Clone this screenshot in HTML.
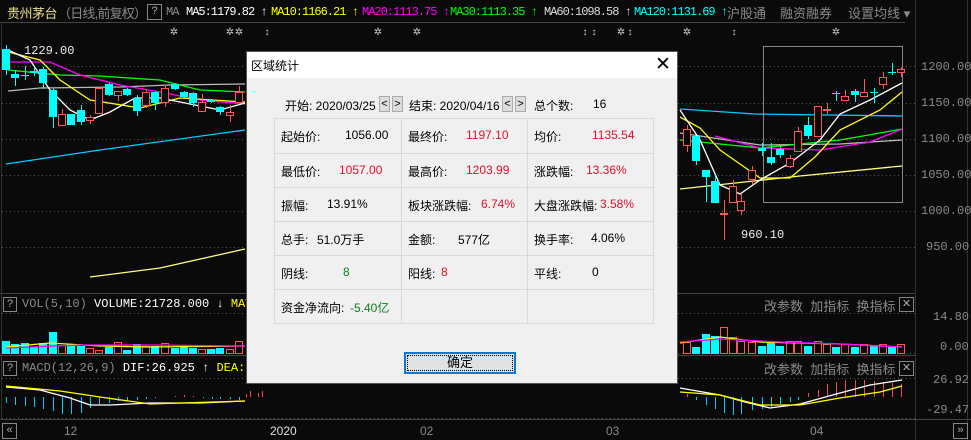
<!DOCTYPE html>
<html><head><meta charset="utf-8"><style>
body{margin:0;width:971px;height:440px;background:#0a0a0a;overflow:hidden;position:relative;font-family:"Liberation Sans","Noto Sans CJK SC",sans-serif}
.t{position:absolute;white-space:nowrap}
.m{font-family:"Liberation Mono","Noto Sans CJK SC",monospace;font-size:12px}
.hm{position:absolute;top:5px;font-family:"Liberation Mono",monospace;font-size:12px;letter-spacing:-1px;white-space:nowrap}
.g{color:#8a8a8a}
.box{position:absolute;border:1px solid #888;color:#aaa;font-size:11px;text-align:center;line-height:13px}
#dlg{position:absolute;left:246px;top:51px;width:432px;height:333px;background:#f0f0f0;border:1px solid #555;box-sizing:border-box;font-size:12px;color:#000}
#dlg .tb{position:absolute;left:0;top:0;width:430px;height:26px;background:#fff}
.c{position:absolute;border:1px solid #d8d8d8;box-sizing:border-box}
.r{color:#e0102a}.gr{color:#108020}
.nb{position:absolute;width:11px;height:16px;border:1px solid #aaa;background:#ddd;font-size:11px;line-height:15px;text-align:center;box-sizing:border-box}
</style></head><body>
<svg id="s" width="971" height="440" style="position:absolute;left:0;top:0"></svg>

<div class="t" style="left:7px;top:3px;font-size:13px;color:#e6dc8c;letter-spacing:-0.5px">贵州茅台</div>
<div class="t g" style="left:58px;top:3px;font-size:13px;letter-spacing:-0.8px">（日线,前复权）</div>
<div class="box" style="left:147px;top:4px;width:13px;height:14px">?</div>
<div class="hm g" style="left:166px">MA</div>
<div class="hm" style="left:186px;color:#fff">MA5:1179.82 ↑</div>
<div class="hm" style="left:271px;color:#ff0">MA10:1166.21 ↑</div>
<div class="hm" style="left:362px;color:#f0f">MA20:1113.75 ↑</div>
<div class="hm" style="left:450px;color:#0f0">MA30:1113.35 ↑</div>
<div class="hm" style="left:544px;color:#ddd">MA60:1098.58 ↑</div>
<div class="hm" style="left:634px;color:#0ff">MA120:1131.69 ↑</div>
<div class="t g" style="left:727px;top:3px;font-size:13px">沪股通</div>
<div class="t g" style="left:780px;top:3px;font-size:13px">融资融券</div>
<div class="t g" style="left:848px;top:3px;font-size:13px">设置均线 ▾</div>

<div class="t m" style="left:24px;top:44px;color:#eee;font-size:12px">1229.00</div>
<div class="t m" style="left:741px;top:228px;color:#eee">960.10</div>

<div class="t m g" style="left:921px;top:60px">1200.00</div>
<div class="t m g" style="left:921px;top:96px">1150.00</div>
<div class="t m g" style="left:921px;top:132px">1100.00</div>
<div class="t m g" style="left:921px;top:168px">1050.00</div>
<div class="t m g" style="left:921px;top:204px">1000.00</div>
<div class="t m g" style="left:926px;top:240px">950.00</div>
<div class="t m g" style="left:933px;top:310px">14.80</div>
<div class="t m g" style="left:940px;top:340px">0.00</div>
<div class="t m g" style="left:933px;top:373px">26.92</div>
<div class="t m g" style="left:926px;top:403px">-29.47</div>

<div class="box" style="left:3px;top:297px;width:12px;height:13px">?</div>
<div class="t m" style="left:22px;top:297px"><span class="g">VOL(5,10)</span> <span style="color:#fff">VOLUME:21728.000 ↓</span> <span style="color:#ff0">MAVOL1:2</span></div>
<div class="box" style="left:3px;top:361px;width:12px;height:13px">?</div>
<div class="t m" style="left:22px;top:361px"><span class="g">MACD(12,26,9)</span> <span style="color:#fff">DIF:26.925 ↑</span> <span style="color:#ff0">DEA:17.388</span></div>
<div class="t g" style="left:764px;top:296px;font-size:13px">改参数 &nbsp;加指标 &nbsp;换指标</div>
<div class="box" style="left:899px;top:297px;width:13px;height:13px">✕</div>
<div class="t g" style="left:764px;top:359px;font-size:13px">改参数 &nbsp;加指标 &nbsp;换指标</div>
<div class="box" style="left:899px;top:361px;width:13px;height:13px">✕</div>

<div class="box" style="left:2px;top:423px;width:13px;height:14px">«</div>
<div class="box" style="left:953px;top:423px;width:13px;height:14px">»</div>
<div class="t g" style="left:64px;top:424px;font-size:12px">12</div>
<div class="t" style="left:270px;top:424px;font-size:12px;color:#ddd">2020</div>
<div class="t g" style="left:420px;top:424px;font-size:12px">02</div>
<div class="t g" style="left:606px;top:424px;font-size:12px">03</div>
<div class="t g" style="left:810px;top:424px;font-size:12px">04</div>

<div id="dlg">
 <div class="tb"></div>
 <div class="t" style="left:4px;top:5px;font-size:12px">区域统计</div>
 <div class="t" style="left:408px;top:1px;font-size:19px;font-weight:300">✕</div>
 <div class="t" style="left:38px;top:45px">开始: 2020/03/25</div>
 <div class="nb" style="left:132px;top:44px">&lt;</div><div class="nb" style="left:145px;top:44px">&gt;</div>
 <div class="t" style="left:162px;top:45px">结束: 2020/04/16</div>
 <div class="nb" style="left:255px;top:44px">&lt;</div><div class="nb" style="left:268px;top:44px">&gt;</div>
 <div class="t" style="left:287px;top:45px">总个数:</div><div class="t" style="left:346px;top:45px">16</div>
 <div id="grid"></div>
 <div style="position:absolute;left:157px;top:300px;width:112px;height:22px;border:2px solid #0a78d7;box-sizing:border-box;background:#e1e1e1;text-align:center;line-height:17px;font-size:13px"><div style="position:absolute;inset:1px;border:1px dotted #000"></div>确定</div>
</div>

<script>
var g=document.getElementById('grid');
var cols=[27,154,280,406],rows=[66,101,135,169,203,237,271];
var cells=[
[["起始价:","1056.00",""],["最终价:","1197.10","r"],["均价:","1135.54","r"]],
[["最低价:","1057.00","r"],["最高价:","1203.99","r"],["涨跌幅:","13.36%","r"]],
[["振幅:","13.91%",""],["板块涨跌幅:","6.74%","r"],["大盘涨跌幅:","3.58%","r"]],
[["总手:","51.0万手",""],["金额:","577亿",""],["换手率:","4.06%",""]],
[["阴线:","8","gr"],["阳线:","8","r"],["平线:","0",""]],
[["资金净流向:","-5.40亿","gr"],["","",""],["","",""]]];
var offs=[[64,58,58],[58,58,52],[46,73,66],[36,50,57],[62,33,58],[69,0,0]];
var h='';
for(var i=0;i<6;i++)for(var j=0;j<3;j++){
 var x=cols[j],y=rows[i],w=cols[j+1]-x+1,hh=rows[i+1]-y+1;
 h+='<div class="c" style="left:'+x+'px;top:'+y+'px;width:'+w+'px;height:'+hh+'px"></div>';
 var cc=cells[i][j];
 if(cc[0]){h+='<div class="t" style="left:'+(x+7)+'px;top:'+(y+10)+'px">'+cc[0]+'</div>';
 h+='<div class="t '+cc[2]+'" style="left:'+(x+7+offs[i][j])+'px;top:'+(y+10)+'px">'+cc[1]+'</div>';}
}
g.innerHTML=h;

var S='';
function L(x1,y1,x2,y2,c,d){S+='<line x1="'+x1+'" y1="'+y1+'" x2="'+x2+'" y2="'+y2+'" stroke="'+c+'" stroke-width="1"'+(d?' stroke-dasharray="1,3"':'')+'/>';}
function P(pts,c){S+='<polyline fill="none" stroke="'+c+'" stroke-width="1.3" points="'+pts+'"/>';}
L(0,22.5,905,22.5,'#444');L(915.5,0,915.5,440,'#333');L(967.5,0,967.5,440,'#333');
L(0,293.5,915,293.5,'#444');L(0,355.5,915,355.5,'#444');L(0,419.5,971,419.5,'#444');L(1.5,22,1.5,420,'#333');
[66,103,139,175,211,247].forEach(function(y){L(2,y+.5,915,y+.5,'#555',1)});
L(2,313.5,915,313.5,'#555',1);L(2,353.5,915,353.5,'#555',1);L(2,378.5,915,378.5,'#555',1);L(2,418.5,915,418.5,'#555',1);
[[174,'✲'],[230,'✲'],[239,'✲'],[267,'↕'],[378,'✲'],[417,'✲'],[585,'↕'],[594,'↕'],[621,'✲'],[630,'↕'],[687,'✲'],[734,'↕'],[836,'✲']].forEach(function(a){S+='<text x="'+a[0]+'" y="35" fill="#ccc" font-size="10" text-anchor="middle">'+a[1]+'</text>'});
S+='<rect x="763.5" y="46.5" width="139" height="156" fill="none" stroke="#888"/>';
P('8,91 40,88 120,87 170,85 245,84','#bbb');
P('8,70 60,75 100,76 160,80 200,90 245,92','#0f0');
P('8,62 50,62 80,75 120,85 160,92 200,100 245,104','#f0f');
P('8,52 40,60 60,80 90,100 140,108 180,98 245,102','#ff0');
P('8,50 30,60 50,90 70,110 90,120 110,112 135,98 160,98 190,104 220,110 245,103','#fff');
P('6,164 100,150 245,130','#0cf');P('90,277 160,268 245,249','#ffff80');
P('680,109 755,114 902,116','#0cf');P('680,189 800,176 902,166','#ffff80');
P('680,133 760,145 840,144 902,140','#bbb');
P('680,140 760,148 840,140 880,133 902,129','#0f0');
P('715,136 760,148 820,150 870,142 902,129','#f0f');
P('680,117 700,128 720,150 760,178 790,178 815,157 840,130 880,110 902,92','#ff0');
P('680,110 700,140 720,185 740,194 760,180 790,163 820,140 840,114 870,100 902,83','#fff');
var C=[[6,49,70,45,75,0],[15,74,78,70,86,0],[25,75,76,66,80,0],[34,71,73,68,76,0],[43,69,83,67,89,0],[53,90,117,88,128,0],[62,114,125,109,125,1],[71,114,125,114,125,0],[81,110,122,105,125,0],[90,117,120,115,124,1],[99,88,113,88,113,1],[109,84,95,83,96,0],[118,91,95,91,101,1],[127,89,95,88,96,0],[137,98,111,95,116,0],[146,92,105,90,108,1],[155,92,103,91,110,0],[165,88,102,85,107,1],[175,84,89,83,90,0],[184,92,97,91,98,0],[193,93,103,92,107,0],[202,102,111,94,111,1],[211,100,102,99,103,0],[220,107,112,106,115,0],[230,112,115,105,122,1],[239,92,102,86,102,1],
[687,129,145,125,152,1],[696,136,161,136,165,0],[706,170,177,170,202,0],[715,181,203,175,203,0],[724,213,214,200,240,1],[733,186,202,180,202,1],[741,201,210,194,215,1],[752,170,179,166,185,1],[762,148,151,143,156,0],[771,157,163,143,165,0],[780,149,155,145,158,0],[790,158,166,155,168,1],[798,131,151,127,152,1],[808,125,136,117,139,0],[818,106,136,106,136,1],[827,109,110,103,114,1],[836,93,94,91,101,0],[845,96,100,90,101,1],[855,91,95,89,102,0],[864,92,96,79,97,1],[874,92,93,88,103,0],[883,77,84,72,89,1],[892,72,73,63,75,0],[901,69,72,67,77,1]];
C.forEach(function(c){var col=c[5]?'#f55':'#0ff';L(c[0]+.5,c[3],c[0]+.5,c[4],col);
 if(c[5])S+='<rect x="'+(c[0]-3.5)+'" y="'+(c[1]+.5)+'" width="7" height="'+Math.max(1,c[2]-c[1])+'" fill="#0a0a0a" stroke="#f55"/>';
 else S+='<rect x="'+(c[0]-4)+'" y="'+c[1]+'" width="8" height="'+Math.max(1,c[2]-c[1])+'" fill="#0ff"/>';});
var vh=[13,10,11,7,11,22,8,10,8,5,3,7,11,4,10,7,8,10,6,8,6,4,5,6,4,12];
for(var i=0;i<26;i++){var x=C[i][0],h=vh[i],red=C[i][5];
 if(red)S+='<rect x="'+(x-3.5)+'" y="'+(353.5-h)+'" width="7" height="'+h+'" fill="none" stroke="#f55"/>';else S+='<rect x="'+(x-4)+'" y="'+(354-h)+'" width="8" height="'+h+'" fill="#0ff"/>';}
var vr=[11,7,20,18,26,16,12,11,8,13,8,12,12,8,12,9,7,9,7,9,8,9,7,9,5,5];
for(var i=0;i<24;i++){var x=C[26+i][0],h=vr[i],red=C[26+i][5];
 if(red)S+='<rect x="'+(x-3.5)+'" y="'+(353.5-h)+'" width="7" height="'+h+'" fill="none" stroke="#f55"/>';else S+='<rect x="'+(x-4)+'" y="'+(354-h)+'" width="8" height="'+h+'" fill="#0ff"/>';}
P('6,347 50,343 100,346 150,347 245,346','#ff0');P('6,348 80,345 150,345 245,346','#f0f');
P('680,343 720,337 760,342 800,343 840,344 902,347','#ff0');P('680,342 720,339 780,342 840,344 902,347','#f0f');
var mb=[[6,-6],[15,-8],[25,-9],[34,-10],[43,-12],[53,-14],[62,-17],[71,-17],[81,-16],[90,-11],[99,-7],[109,-6],[118,-4],[127,-4],[137,-3],[146,-2],[155,-1],[175,1],[184,2],[193,1],[203,-1],[212,-2],[220,-2],[230,-2],[239,-3],[246,3],[250,6],[258,4],[262,6],
[687,3],[696,-3],[706,-8],[715,-12],[724,-16],[733,-18],[741,-17],[752,-13],[762,-12],[771,-10],[780,-7],[790,-5],[798,-3],[808,4],[818,7],[827,13],[836,15],[845,17],[855,17],[864,17],[874,16],[883,15],[892,14],[901,13]];
mb.forEach(function(b){var c=b[1]>0?'#f44':'#0cf';L(b[0]+.5,397,b[0]+.5,397-b[1],c)});
P('6,387 40,390 70,398 90,405 110,405 150,403 200,403 245,401','#fff');
P('6,386 60,391 100,397 150,404 245,401','#ff0');
P('680,388 720,395 745,402 770,408 800,404 840,393 870,385 902,380','#fff');
P('680,392 720,395 760,405 800,405 840,398 880,392 902,386','#ff0');
document.getElementById('s').innerHTML=S;
</script>
</body></html>
